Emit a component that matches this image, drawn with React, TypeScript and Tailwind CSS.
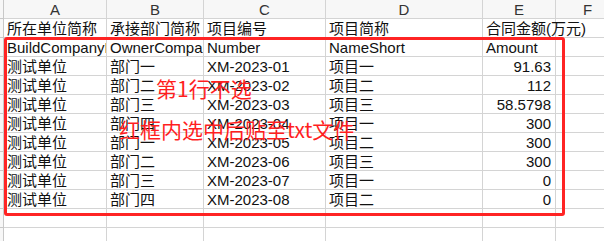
const cols = ['A', 'B', 'C', 'D', 'E', 'F']

type Row = string[]

const rows: Row[] = [
  ['所在单位简称', '承接部门简称', '项目编号', '项目简称', '合同金额(万元)', ''],
  ['BuildCompanyName', 'OwnerCompanyName', 'Number', 'NameShort', 'Amount', ''],
  ['测试单位', '部门一', 'XM-2023-01', '项目一', '91.63', ''],
  ['测试单位', '部门二', 'XM-2023-02', '项目二', '112', ''],
  ['测试单位', '部门三', 'XM-2023-03', '项目三', '58.5798', ''],
  ['测试单位', '部门四', 'XM-2023-04', '项目一', '300', ''],
  ['测试单位', '部门一', 'XM-2023-05', '项目二', '300', ''],
  ['测试单位', '部门二', 'XM-2023-06', '项目三', '300', ''],
  ['测试单位', '部门三', 'XM-2023-07', '项目一', '0', ''],
  ['测试单位', '部门四', 'XM-2023-08', '项目二', '0', ''],
  ['', '', '', '', '', ''],
  ['', '', '', '', '', ''],
]

const font = { fontFamily: '"Liberation Sans", "Noto Sans CJK SC", sans-serif' }

function Cell({ value, numeric, spill }: { value: string; numeric: boolean; spill: boolean }) {
  // text spills into an empty neighbour, as a spreadsheet does
  return (
    <div
      className={`h-[19px] border-r border-b border-[#d4d4d4] whitespace-nowrap px-[3px] leading-[19px] text-[15px] text-[#111] ${
        numeric ? 'text-right pr-[4px]' : 'text-left'
      } ${spill ? 'overflow-visible relative z-10' : 'overflow-hidden'}`}
    >
      {value}
    </div>
  )
}

export default function App() {
  return (
    <div className="relative w-[604px] h-[241px] overflow-hidden bg-white" style={font}>
      <div className="grid grid-cols-[4px_103px_97px_122px_157px_73px_64px] w-[620px]">
        <div className="h-[19px] border-r border-b border-[#c8c8c8] bg-[#f7f7f7]" />
        {cols.map((c) => (
          <div
            key={c}
            className="h-[19px] border-r border-b border-[#d4d4d4] bg-[#f7f7f7] text-center text-[15px] leading-[19px] text-[#333]"
          >
            {c}
          </div>
        ))}
        {rows.map((r, i) => (
          <div key={i} className="contents">
            <div className="h-[19px] border-r border-b border-[#c8c8c8] bg-[#f7f7f7]" />
            {r.map((v, j) => (
              <Cell key={j} value={v} numeric={j === 4 && i > 1} spill={j === 4 && i === 0} />
            ))}
          </div>
        ))}
      </div>

      {/* annotation overlay */}
      <div className="absolute left-[4px] top-[37px] w-[561px] h-[179px] border-[3px] border-[#ff2424] rounded-[3px] z-20" />
      <div
        className="absolute left-[156px] top-[76px] text-[21px] leading-[24px] text-[#ff1f1f] z-20"
        style={{ fontFamily: '"Noto Sans CJK SC", sans-serif' }}
      >
        第1行不选
      </div>
      <div
        className="absolute left-[119px] top-[117px] text-[21px] leading-[24px] text-[#ff1f1f] z-20"
        style={{ fontFamily: '"Noto Sans CJK SC", sans-serif' }}
      >
        红框内选中后贴至txt文件
      </div>
    </div>
  )
}
